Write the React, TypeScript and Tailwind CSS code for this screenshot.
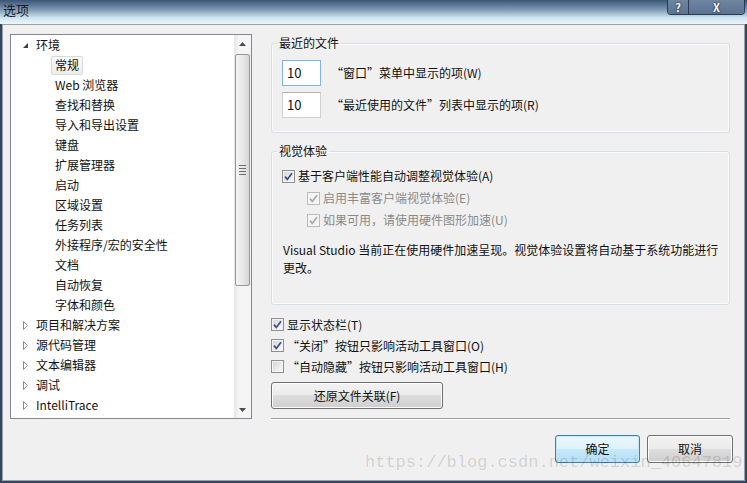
import React from "react";
import clsx from "clsx";

const treeChildren = [
  "常规",
  "Web 浏览器",
  "查找和替换",
  "导入和导出设置",
  "键盘",
  "扩展管理器",
  "启动",
  "区域设置",
  "任务列表",
  "外接程序/宏的安全性",
  "文档",
  "自动恢复",
  "字体和颜色",
];

const treeCollapsed = ["项目和解决方案", "源代码管理", "文本编辑器", "调试", "IntelliTrace"];

function CheckBox({ checked, disabled }: { checked: boolean; disabled?: boolean }) {
  return (
    <span
      className={clsx(
        "w-[13px] h-[13px] shrink-0 border flex items-center justify-center",
        disabled
          ? "border-[#bcbcbc] bg-[#f4f4f4]"
          : "border-[#8e8f8f] bg-[linear-gradient(135deg,#d4d4d4,#fbfbfb)] shadow-[inset_0_0_0_1px_#f4f4f4]"
      )}
    >
      {checked && (
        <svg width="11" height="11" viewBox="0 0 11 11">
          <path
            d="M2 5.6 L4.3 8.4 L9 2.2"
            fill="none"
            stroke={disabled ? "#a9a9a9" : "#3a4f8c"}
            strokeWidth="1.7"
          />
        </svg>
      )}
    </span>
  );
}

function Arrow({ open }: { open: boolean }) {
  return open ? (
    <svg width="9" height="9" viewBox="0 0 9 9" className="shrink-0">
      <path d="M7 2 L7 7 L2 7 Z" fill="#3c3c3c" />
    </svg>
  ) : (
    <svg width="9" height="9" viewBox="0 0 9 9" className="shrink-0">
      <path d="M2.5 0.5 L6.5 4.5 L2.5 8.5 Z" fill="#fff" stroke="#8c8c8c" strokeWidth="1" />
    </svg>
  );
}

function Tree() {
  return (
    <div className="mt-[9px] ml-[7px] w-[242px] h-[385px] border border-[#828790] bg-white flex">
      <div className="flex-1 flex flex-col">
        <div className="h-[20px] flex items-center pl-[10px]">
          <Arrow open />
          <span className="ml-[6px]">环境</span>
        </div>
        {treeChildren.map((t, i) => (
          <div key={t} className="h-[20px] flex items-center pl-[40px]">
            <span
              className={clsx(
                "h-[19px] px-[3px] flex items-center border rounded-[2px]",
                i === 0
                  ? "border-[#d9d9d9] bg-[linear-gradient(#fafafa,#ededed)]"
                  : "border-transparent"
              )}
            >
              {t}
            </span>
          </div>
        ))}
        {treeCollapsed.map((t) => (
          <div key={t} className="h-[20px] flex items-center pl-[10px]">
            <Arrow open={false} />
            <span className="ml-[6px]">{t}</span>
          </div>
        ))}
      </div>
      {/* scrollbar */}
      <div className="w-[17px] flex flex-col bg-[linear-gradient(90deg,#e6e6e6,#f5f5f5_30%,#f5f5f5)]">
        <div className="h-[17px] flex items-center justify-center">
          <svg width="7" height="4" viewBox="0 0 7 4">
            <path d="M0 4 L3.5 0 L7 4 Z" fill="#4d4d4d" />
          </svg>
        </div>
        <div className="mx-[1px] mt-[2px] h-[232px] border border-[#979797] rounded-[2px] bg-[linear-gradient(90deg,#f3f3f3,#e8e8e8_50%,#d6d6d6)] flex items-center justify-center">
          <div className="flex flex-col gap-[2px]">
            <div className="w-[7px] h-px bg-[#6b6b6b]" />
            <div className="w-[7px] h-px bg-[#6b6b6b]" />
            <div className="w-[7px] h-px bg-[#6b6b6b]" />
            <div className="w-[7px] h-px bg-[#6b6b6b]" />
          </div>
        </div>
        <div className="flex-1" />
        <div className="h-[17px] flex items-center justify-center">
          <svg width="7" height="4" viewBox="0 0 7 4">
            <path d="M0 0 L3.5 4 L7 0 Z" fill="#4d4d4d" />
          </svg>
        </div>
      </div>
    </div>
  );
}

function NumBox({ value, focused }: { value: string; focused?: boolean }) {
  return (
    <div
      className={clsx(
        "w-[39px] h-[26px] border bg-white flex items-center pl-[4px] text-[13px]",
        focused ? "border-[#7eb4ea]" : "border-[#d0d0d0] border-t-[#b0b0b0]"
      )}
    >
      {value}
    </div>
  );
}

export default function App() {
  return (
    <div className="w-[747px] h-[483px] flex flex-col px-[2px] pb-[2px] bg-[#2f4868] font-['Noto_Sans_CJK_SC',sans-serif] text-[12px] text-[#111] relative overflow-hidden">
      {/* title bar */}
      <div className="-mx-[2px] h-[24px] flex items-start bg-[linear-gradient(#3a5476_0%,#7d99b5_40%,#d0e6f1_75%,#eaf6fb_100%)]">
        <span className="pl-[3px] pt-[1px] text-[13px] leading-[17px] text-[#1a1a1a]">选项</span>
        <div className="flex-1" />
        <div className="mr-[2px] h-[15px] flex border border-t-0 border-[#2c3b50] rounded-b-[4px] overflow-hidden">
          <div className="w-[20px] flex items-center justify-center text-white font-bold text-[11px] leading-none bg-[linear-gradient(#6f86a3,#5a7290)] [text-shadow:0_0_2px_#000]">
            ?
          </div>
          <div className="w-[56px] border-l border-[#2c3b50] flex items-center justify-center text-white font-bold text-[11px] leading-none bg-[linear-gradient(#6f86a3,#5a7290)] [text-shadow:0_0_2px_#000]">
            X
          </div>
        </div>
      </div>

      {/* client area */}
      <div className="flex-1 border border-[#a0a0a0] bg-[#f0f0f0] flex flex-col">
        <div className="flex items-start">
          <Tree />
          <div className="ml-[19px] mt-[10px] w-[459px] flex flex-col">
            <fieldset className="border border-[#d5dfe5] rounded-[3px] shadow-[inset_0_0_0_1px_#fbfbfb]">
              <legend className="ml-[5px] px-[2px] leading-[16px]">最近的文件</legend>
              <div className="pt-[9px] pb-[14px] pl-[10px] flex flex-col gap-[6px]">
                <div className="flex items-center">
                  <NumBox value="10" focused />
                  <span className="ml-[10px]">“窗口”菜单中显示的项(W)</span>
                </div>
                <div className="flex items-center">
                  <NumBox value="10" />
                  <span className="ml-[10px]">“最近使用的文件”列表中显示的项(R)</span>
                </div>
              </div>
            </fieldset>

            <fieldset className="mt-[10px] border border-[#d5dfe5] rounded-[3px] shadow-[inset_0_0_0_1px_#fbfbfb]">
              <legend className="ml-[5px] px-[2px] leading-[16px]">视觉体验</legend>
              <div className="pt-[6px] pb-[27px] flex flex-col">
                <div className="h-[22px] flex items-center pl-[10px] gap-[3px]">
                  <CheckBox checked />
                  <span>基于客户端性能自动调整视觉体验(A)</span>
                </div>
                <div className="h-[22px] flex items-center pl-[35px] gap-[3px] text-[#8a8a8a]">
                  <CheckBox checked disabled />
                  <span>启用丰富客户端视觉体验(E)</span>
                </div>
                <div className="h-[22px] flex items-center pl-[35px] gap-[3px] text-[#8a8a8a]">
                  <CheckBox checked disabled />
                  <span>如果可用，请使用硬件图形加速(U)</span>
                </div>
                <p className="mt-[10px] pl-[11px] leading-[18px]">
                  Visual Studio 当前正在使用硬件加速呈现。视觉体验设置将自动基于系统功能进行
                  <br />
                  更改。
                </p>
              </div>
            </fieldset>

            <div className="mt-[9px] flex flex-col">
              <div className="h-[21px] flex items-center gap-[3px]">
                <CheckBox checked />
                <span>显示状态栏(T)</span>
              </div>
              <div className="h-[21px] flex items-center gap-[3px]">
                <CheckBox checked />
                <span>“关闭”按钮只影响活动工具窗口(O)</span>
              </div>
              <div className="h-[21px] flex items-center gap-[3px]">
                <CheckBox checked={false} />
                <span>“自动隐藏”按钮只影响活动工具窗口(H)</span>
              </div>
            </div>

            <button className="mt-[5px] w-[172px] h-[27px] border border-[#707070] rounded-[3px] bg-[linear-gradient(#f2f2f2_0%,#ebebeb_50%,#dddddd_50%,#cfcfcf_100%)] shadow-[inset_0_0_0_1px_#fcfcfc] flex items-center justify-center">
              还原文件关联(F)
            </button>

            <div className="mt-[9px] h-[2px] border-t border-[#a0a0a0] border-b border-b-white" />
          </div>
        </div>

        <div className="mt-[15px] flex justify-end gap-[7px] pr-[11px]">
          <button className="w-[85px] h-[28px] border border-[#3c7fb1] rounded-[3px] bg-[linear-gradient(#ecf7fd_0%,#ddf2fc_50%,#c6e8fa_50%,#b6def6_100%)] shadow-[inset_0_0_0_1px_#bfe6fb] flex items-center justify-center leading-[12px]">
            确定
          </button>
          <button className="w-[86px] h-[28px] border border-[#707070] rounded-[3px] bg-[linear-gradient(#f2f2f2_0%,#ebebeb_50%,#dddddd_50%,#cfcfcf_100%)] shadow-[inset_0_0_0_1px_#fcfcfc] flex items-center justify-center leading-[12px]">
            取消
          </button>
        </div>
      </div>

      {/* watermark */}
      <div className="absolute left-[365px] top-[456px] font-['Liberation_Mono',monospace] text-[17px] leading-[14px] text-black/15 pointer-events-none">
        https://blog.csdn.net/weixin_40647819
      </div>
    </div>
  );
}
